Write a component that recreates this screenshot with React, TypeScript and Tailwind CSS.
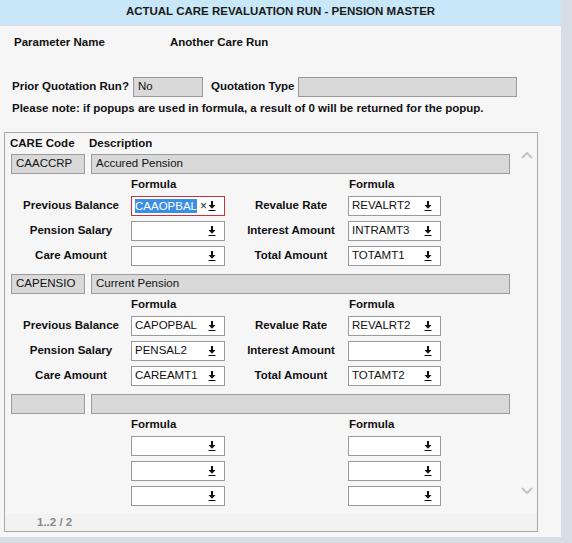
const DownIcon = () => (
  <svg width="8" height="10" viewBox="0 0 8 10" className="shrink-0">
    <rect x="3" y="0" width="2" height="4" fill="#111" />
    <polygon points="0.5,4 7.5,4 4,7.8" fill="#111" />
    <rect x="0.5" y="9" width="7" height="1" fill="#111" />
  </svg>
);

function Picker({ value, w, active }: { value?: string; w: string; active?: boolean }) {
  return (
    <div
      className={`${w} flex h-[20px] items-center justify-between border bg-white pl-[3px] pr-[8px] text-[11.5px] font-normal ${
        active ? "border-[#c8323c]" : "border-[#9a9a9a]"
      }`}
    >
      {active ? (
        <span className="flex items-center">
          <span className="bg-[#3b8ee6] text-white leading-[14px]">{value}</span>
          <span className="ml-[3px] text-[12px] text-[#222]">×</span>
        </span>
      ) : (
        <span className="text-[#111]">{value}</span>
      )}
      <DownIcon />
    </div>
  );
}

type Row = { l: string; lv?: string; r: string; rv?: string; active?: boolean };

function Section({ code, desc, rows }: { code: string; desc: string; rows: Row[] }) {
  return (
    <div className="mb-[8px]">
      <div className="flex h-[20px] gap-[6px] pl-[6px]">
        <div className="flex w-[74px] items-center border border-[#9a9a9a] bg-[#d9d9d9] pl-[4px] text-[11.5px]">{code}</div>
        <div className="flex w-[419px] items-center border border-[#9a9a9a] bg-[#d9d9d9] pl-[4px] text-[11.5px]">{desc}</div>
      </div>
      <div className="flex h-[22px] items-center font-bold text-[11.5px]">
        <span className="ml-[126px] w-[218px]">Formula</span>
        <span>Formula</span>
      </div>
      <div className="flex flex-col gap-[5px]">
        {rows.map((r, i) => (
          <div key={i} className="flex items-center text-[11.5px] font-bold">
            <span className="ml-[11px] w-[110px] text-center">{r.l}</span>
            <span className="ml-[5px]">
              <Picker value={r.lv} w="w-[94px]" active={r.active} />
            </span>
            <span className="ml-[9px] w-[114px] text-center">{r.r}</span>
            <span>
              <Picker value={r.rv} w="w-[93px]" />
            </span>
          </div>
        ))}
      </div>
    </div>
  );
}

export default function App() {
  return (
    <div className="flex h-[543px] w-[572px] flex-col bg-[#d8dee6] text-[#111]" style={{ fontFamily: "'Liberation Sans', Arial, sans-serif" }}>
      <div className="flex h-[537px] w-[561px] flex-col bg-[#f7f6f7]">
        <div className="flex h-[24px] items-center justify-center bg-[#c8e7f8] text-[11.5px] font-bold text-[#1a1a1a]">
          ACTUAL CARE REVALUATION RUN - PENSION MASTER
        </div>
        <div className="h-[2px] bg-[#d6e0e8]" />
        <div className="mt-[10px] flex h-[14px] items-center text-[11.5px] font-bold">
          <span className="ml-[14px] w-[156px]">Parameter Name</span>
          <span>Another Care Run</span>
        </div>
        <div className="mt-[27px] flex h-[20px] items-center text-[11.5px] font-bold">
          <span className="ml-[12px] w-[121px]">Prior Quotation Run?</span>
          <div className="flex h-[20px] w-[70px] items-center border border-[#9a9a9a] bg-[#d9d9d9] pl-[4px] font-normal">No</div>
          <span className="ml-[8px] w-[87px]">Quotation Type</span>
          <div className="h-[20px] w-[219px] border border-[#9a9a9a] bg-[#d9d9d9]" />
        </div>
        <div className="mt-[2px] ml-[12px] h-[16px] text-[11.5px] font-bold leading-[18px]">
          Please note: if popups are used in formula, a result of 0 will be returned for the popup.
        </div>
        <div className="relative ml-[4px] mt-[17px] flex h-[400px] w-[534px] flex-col border border-[#a9a9a9]">
          <div className="flex h-[24px] items-center pt-[1px] text-[11.5px] font-bold">
            <span className="ml-[5px] w-[79px]">CARE Code</span>
            <span>Description</span>
          </div>
          <Section
            code="CAACCRP"
            desc="Accured Pension"
            rows={[
              { l: "Previous Balance", lv: "CAAOPBAL", r: "Revalue Rate", rv: "REVALRT2", active: true },
              { l: "Pension Salary", r: "Interest Amount", rv: "INTRAMT3" },
              { l: "Care Amount", r: "Total Amount", rv: "TOTAMT1" },
            ]}
          />
          <Section
            code="CAPENSIO"
            desc="Current Pension"
            rows={[
              { l: "Previous Balance", lv: "CAPOPBAL", r: "Revalue Rate", rv: "REVALRT2" },
              { l: "Pension Salary", lv: "PENSAL2", r: "Interest Amount" },
              { l: "Care Amount", lv: "CAREAMT1", r: "Total Amount", rv: "TOTAMT2" },
            ]}
          />
          <Section
            code=""
            desc=""
            rows={[
              { l: "", r: "" },
              { l: "", r: "" },
              { l: "", r: "" },
            ]}
          />
          <div className="mt-auto flex h-[19px] items-center bg-[#f2f2f2] pl-[32px] text-[11.5px] font-bold text-[#8a8a8a]">
            1..2 / 2
          </div>
          <svg className="absolute right-[4px] top-[18px]" width="12" height="8" viewBox="0 0 12 8">
            <polyline points="1,7 6,2 11,7" fill="none" stroke="#c4c4c4" strokeWidth="2" />
          </svg>
          <svg className="absolute right-[4px] top-[354px]" width="12" height="8" viewBox="0 0 12 8">
            <polyline points="1,1 6,6 11,1" fill="none" stroke="#c4c4c4" strokeWidth="2" />
          </svg>
        </div>
      </div>
    </div>
  );
}
